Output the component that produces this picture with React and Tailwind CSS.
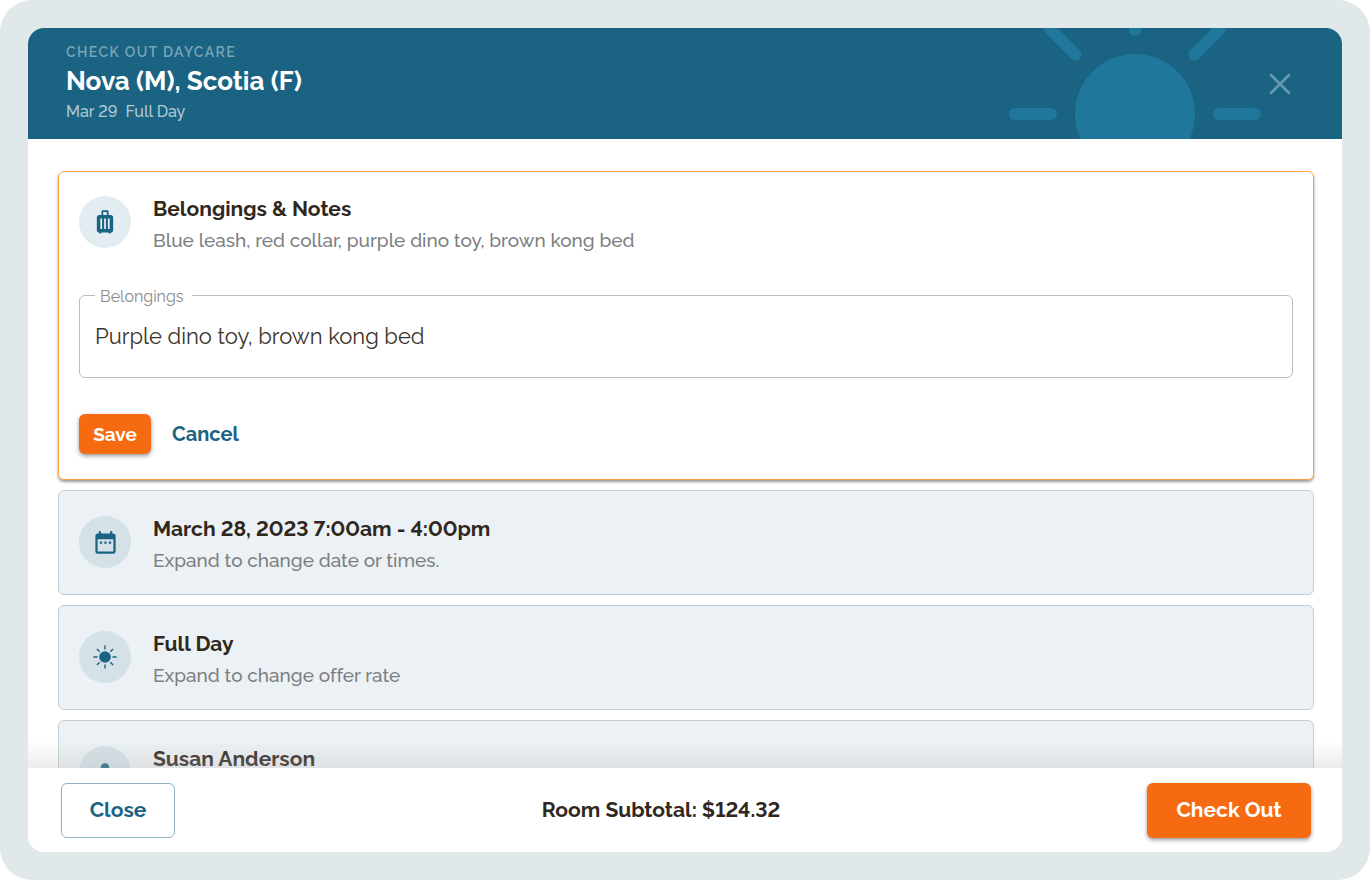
import { useState } from "react";
import { MdDateRange, MdLuggage, MdPerson } from "react-icons/md";

const rows = [
  { title: "March 28, 2023 7:00am - 4:00pm", text: "Expand to change date or times.", icon: <MdDateRange size={27} /> },
  { title: "Full Day", text: "Expand to change offer rate", icon: <SunIcon /> },
  { title: "Susan Anderson", icon: <MdPerson size={26} /> },
];

function SunIcon() {
  return (
    <svg width="24" height="24" viewBox="0 0 24 24" fill="none" stroke="currentColor" strokeWidth="1.4">
      <circle cx="12" cy="12" r="5.8" fill="currentColor" stroke="none" />
      <path d="M12 .5v4M12 19.5v4M.5 12h4M19.5 12h4M3.9 3.9l2.8 2.8M17.3 17.3l2.8 2.8M3.9 20.1l2.8-2.8M17.3 6.7l2.8-2.8" />
    </svg>
  );
}

function HeaderSun() {
  return (
    <svg
      className="absolute right-[81px] -top-10"
      width="252"
      height="252"
      viewBox="-126 -126 252 252"
      stroke="#20779c"
      strokeWidth="12"
      strokeLinecap="round"
      aria-hidden="true"
    >
      <circle r="60" fill="#20779c" stroke="none" />
      <path d="M84 0H120M-84 0H-120M0 -84V-120M0 84V120M59.4 -59.4L84.9 -84.9M-59.4 -59.4L-84.9 -84.9M59.4 59.4L84.9 84.9M-59.4 59.4L-84.9 84.9" />
    </svg>
  );
}

function RowHeading({ icon, title, text, circle }) {
  return (
    <div className="flex items-start gap-[22px]">
      <div className={`flex size-[52px] shrink-0 items-center justify-center rounded-full text-[#1b6383] ${circle}`}>
        {icon}
      </div>
      <div>
        <h2 className="text-[21px] font-bold leading-[26px] text-[#30271d]">{title}</h2>
        {text && <p className="mt-1.5 text-[19px] font-medium leading-6 text-[#7e7f82]">{text}</p>}
      </div>
    </div>
  );
}

export default function App() {
  const [belongings, setBelongings] = useState("Purple dino toy, brown kong bed");

  return (
    <div className="h-screen rounded-[32px] bg-[#e0e8ea] p-7 font-['Raleway','Open_Sans',sans-serif] lining-nums [font-variant-ligatures:none]">
      <div className="flex h-full flex-col overflow-hidden rounded-2xl bg-white">
        <header className="relative flex shrink-0 items-center justify-between overflow-hidden bg-[#1b6383] pr-[50px] pl-[38px]">
          <HeaderSun />
          <div className="pt-3 pb-[13px]">
            <p className="text-[14px] font-semibold leading-6 tracking-widest text-[#79a5b7]">CHECK OUT DAYCARE</p>
            <h1 className="text-[26px] font-bold leading-[34px] text-white">Nova (M), Scotia (F)</h1>
            <p className="whitespace-pre text-[16px] font-medium leading-7 text-[#b0cad5]">Mar 29  Full Day</p>
          </div>
          <button aria-label="Close dialog" className="relative text-[#6799ae]">
            <svg width="24" height="24" viewBox="0 0 24 24" fill="none" stroke="currentColor" strokeWidth="2.7" strokeLinecap="round">
              <path d="M3 3l18 18M21 3L3 21" />
            </svg>
          </button>
        </header>

        <div className="relative min-h-0 flex-1">
          <main className="flex h-full flex-col gap-2.5 overflow-y-auto pt-8 pr-7 pl-[30px] [scrollbar-width:none]">
            <section className="shrink-0 rounded-md border border-[#f9a13d] px-5 pt-6 pb-[25px] shadow-[0_2px_3px_rgba(0,0,0,0.4)]">
              <RowHeading
                icon={<MdLuggage size={28} />}
                title="Belongings & Notes"
                text="Blue leash, red collar, purple dino toy, brown kong bed"
                circle="bg-[#e3ecf1]"
              />
              <fieldset className="mt-[29px] rounded-md border border-[#bdbdbd] px-[15px] pb-2">
                <legend className="pt-1 pr-2 pl-[5px] text-[16px] leading-6 text-[#8a8a8a]">
                  <label htmlFor="belongings">Belongings</label>
                </legend>
                <textarea
                  id="belongings"
                  rows={1}
                  value={belongings}
                  onChange={(e) => setBelongings(e.target.value)}
                  className="block h-[60px] w-full resize-none pt-[11px] text-[22px] leading-8 text-[#3b342b] outline-none"
                />
              </fieldset>
              <div className="mt-9 flex items-center gap-[21px]">
                <button className="h-10 w-[72px] rounded-md bg-[#f66a11] text-[19px] font-bold text-white shadow-[0_2px_4px_rgba(0,0,0,0.4)]">
                  Save
                </button>
                <button className="h-10 text-[20px] font-bold text-[#1b6383]">Cancel</button>
              </div>
            </section>

            {rows.map((row) => (
              <section key={row.title} className="h-[105px] shrink-0 rounded-md border border-[#c5ced2] bg-[#ebf1f4] px-5 pt-[25px]">
                <RowHeading {...row} circle="bg-[#d4e1e7]" />
              </section>
            ))}
          </main>
          <div className="pointer-events-none absolute inset-x-0 bottom-0 h-7 bg-linear-to-b from-transparent to-[#bebebe]/30" />
        </div>

        <footer className="flex h-[84px] shrink-0 items-center justify-between bg-white pr-[31px] pl-[33px]">
          <button className="h-[55px] w-[114px] rounded-md border border-[#8db3c3] text-[21px] font-bold text-[#1b6383]">
            Close
          </button>
          <p className="text-[21px] font-bold text-[#30271d]">Room Subtotal: $124.32</p>
          <button className="h-[55px] w-[164px] rounded-md bg-[#f66a11] text-[21px] font-bold text-white shadow-[0_2px_4px_rgba(0,0,0,0.4)]">
            Check Out
          </button>
        </footer>
      </div>
    </div>
  );
}
